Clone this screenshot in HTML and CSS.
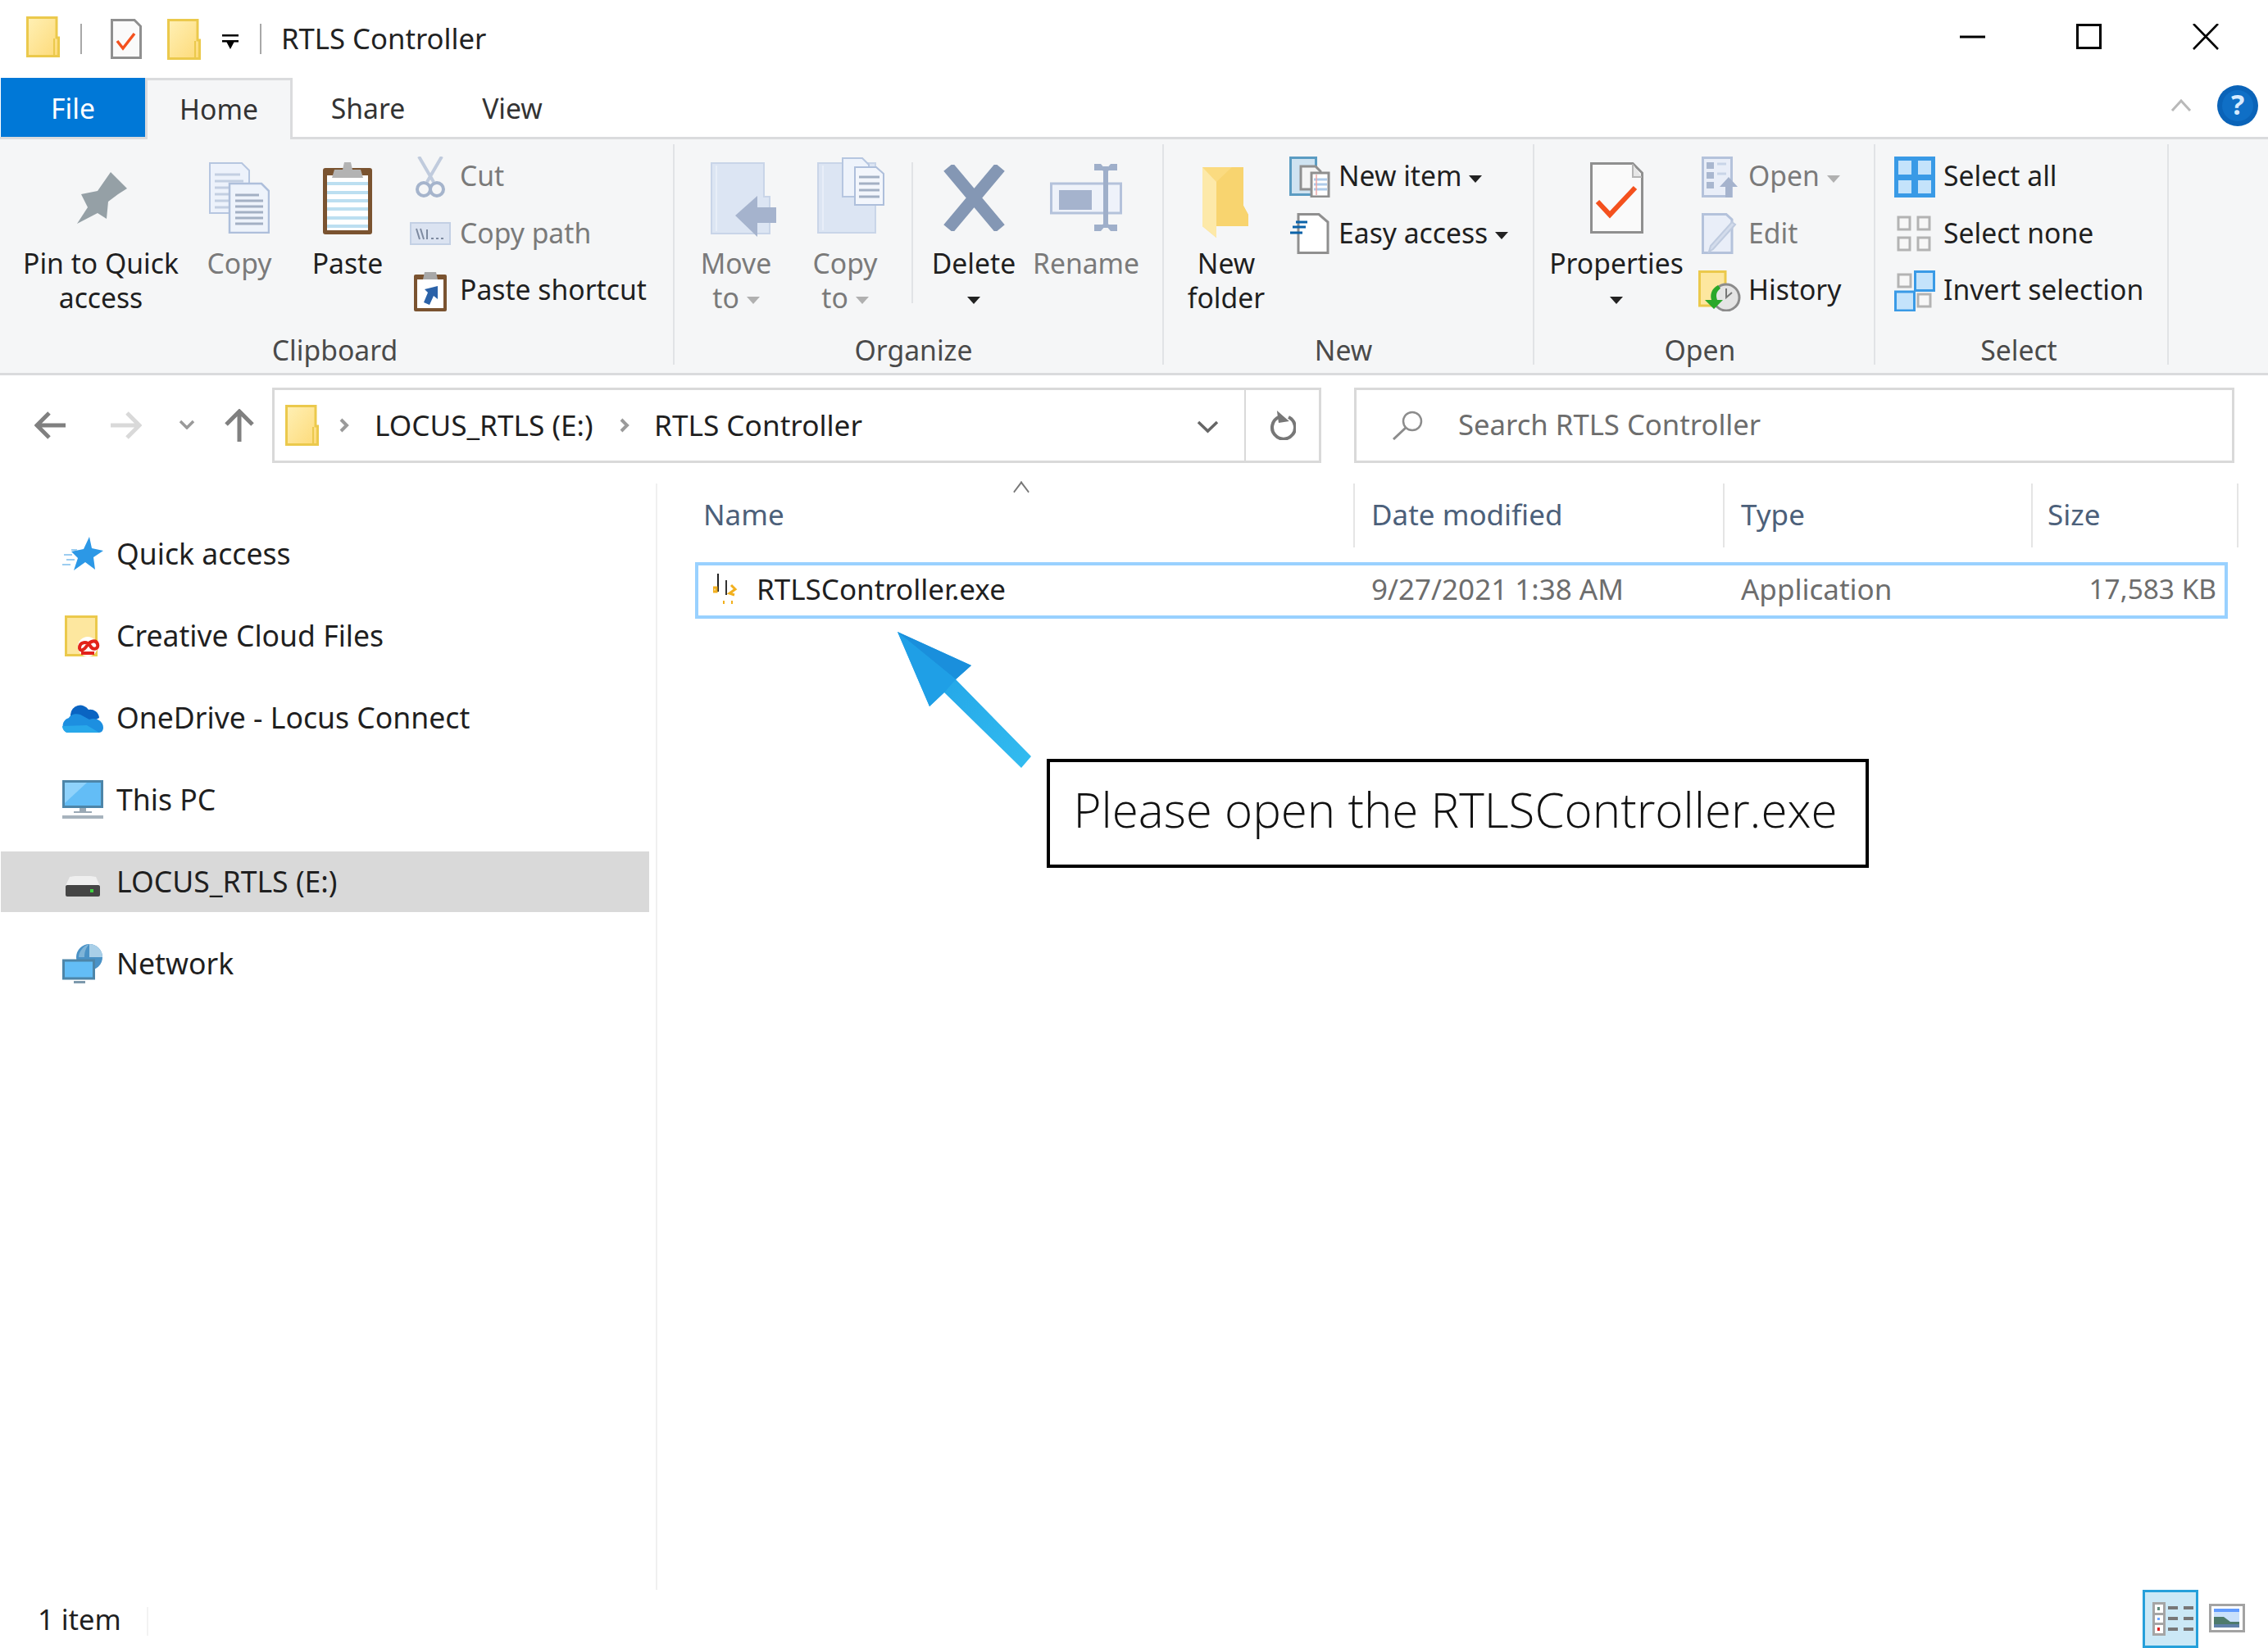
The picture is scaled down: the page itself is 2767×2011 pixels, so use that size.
FILE: index.html
```html
<!DOCTYPE html>
<html lang="en">

<head>
    <meta charset="UTF-8">
    <title>RTLS Controller</title>
    <link rel="stylesheet" href="styles.css">
</head>

<body>
    <svg class="defs" width="0" height="0">
        <defs>
            <linearGradient id="folderFill" x1="0" y1="0" x2="1" y2="1">
                <stop offset="0" stop-color="#fff0b5" />
                <stop offset="1" stop-color="#fdda78" />
            </linearGradient>
            <linearGradient id="arrowFill" x1="0" y1="0" x2="1" y2="1">
                <stop offset="0" stop-color="#1d9de4" />
                <stop offset="1" stop-color="#33bcf0" />
            </linearGradient>
            <symbol id="folder" viewBox="0 0 41 50">
                <path d="M1.5 1.5H37V26H39.5V48.5H1.5Z" fill="url(#folderFill)" stroke="#ebc94c" stroke-width="3" />
                <path d="M34 27V48" stroke="#ebc94c" stroke-width="2" />
            </symbol>
            <symbol id="chev" viewBox="0 0 15 20">
                <path d="M3 3L10 10L3 17" fill="none" stroke="#9a9a9a" stroke-width="4" />
            </symbol>
        </defs>
    </svg>

    <div class="window">
        <!-- title bar -->
        <header class="titlebar">
            <svg class="ico-folder-a" width="41" height="50"><use href="#folder" /></svg>
            <span class="qa-sep"></span>
            <svg class="ico-doc" width="38" height="49" viewBox="0 0 38 49">
                <path d="M1.5 1.5H29L36.5 9V47.5H1.5Z" fill="#fafafa" stroke="#8f8f8f" stroke-width="3" />
                <path d="M8 27L15 36L29 18" fill="none" stroke="#f4511e" stroke-width="3.5" />
            </svg>
            <svg class="ico-folder-b" width="41" height="50"><use href="#folder" /></svg>
            <svg class="ico-qa-menu" width="22" height="18" viewBox="0 0 22 18">
                <path d="M1 0H21V2.5H1ZM1 7H21V9.5H15.5L11 18L6.5 9.5H1Z" />
            </svg>
            <span class="qa-sep sep-b"></span>
            <span class="title-text">RTLS Controller</span>
            <div class="win-buttons">
                <span class="win-btn"><svg width="32" height="32" viewBox="0 0 32 32"><path d="M0 16H31" stroke="#000" stroke-width="3" /></svg></span>
                <span class="win-btn"><svg width="32" height="32" viewBox="0 0 32 32"><rect x="1.5" y="1.5" width="28" height="28" fill="none" stroke="#000" stroke-width="3" /></svg></span>
                <span class="win-btn"><svg width="32" height="32" viewBox="0 0 32 32"><path d="M1 0L31 31M31 0L1 31" stroke="#000" stroke-width="2.6" /></svg></span>
            </div>
        </header>

        <!-- tabs -->
        <nav class="tabs">
            <a class="tab tab-file">File</a>
            <a class="tab tab-home">Home</a>
            <a class="tab tab-share">Share</a>
            <a class="tab tab-view">View</a>
            <svg class="collapse" width="26" height="17" viewBox="0 0 26 17">
                <path d="M2 15L13 3L24 15" fill="none" stroke="#b9b9b9" stroke-width="3" />
            </svg>
            <svg class="help" width="50" height="50" viewBox="0 0 50 50">
                <circle cx="25" cy="25" r="25" fill="#0a63b8" />
                <circle cx="25" cy="25" r="19" fill="#0f6fc6" />
                <text x="25" y="36" text-anchor="middle" class="help-mark">?</text>
            </svg>
        </nav>

        <!-- ribbon -->
        <section class="ribbon">
            <div class="group g-clipboard">
                <div class="group-body">
                    <div class="big b-pin">
                        <span class="big-icon">
                            <svg width="63" height="63" viewBox="0 0 63 63">
                                <path d="M43 0L63 20L52 27L40 36L38 57L27 50L2 63L15 43L7 27L27 23Z" fill="#95a0a6" />
                            </svg>
                        </span>
                        <span class="big-label">Pin to Quick<br>access</span>
                    </div>
                    <div class="big b-copy off">
                        <span class="big-icon">
                            <svg width="74" height="87" viewBox="0 0 74 87">
                                <path d="M1 1H40L49 10V62H1Z" fill="#edf2fb" stroke="#b6c6e0" stroke-width="2" />
                                <path d="M7 15H38M7 23H42M7 31H42M7 39H24M7 47H24M7 55H24" stroke="#c3cfe2" stroke-width="3" />
                                <path d="M25 26H64L73 35V86H25Z" fill="#eef3fb" stroke="#aebfdb" stroke-width="2.5" />
                                <path d="M32 40H61M32 47H66M32 54H66M32 61H66M32 68H66M32 75H66" stroke="#a3b0c4" stroke-width="3" />
                            </svg>
                        </span>
                        <span class="big-label">Copy</span>
                    </div>
                    <div class="big b-paste">
                        <span class="big-icon">
                            <svg width="62" height="90" viewBox="0 0 62 90">
                                <path d="M4 9H58Q61 9 61 12V87Q61 90 58 90H4Q1 90 1 87V12Q1 9 4 9Z" fill="#7a5330" />
                                <rect x="6" y="18" width="50" height="67" fill="#fff" />
                                <path d="M6 28H56M6 39H56M6 49H56M6 59H56M6 70H56M6 80H56" stroke="#bcdff1" stroke-width="4" />
                                <path d="M27 2H35L37 11H47L50 21H12L15 11H25Z" fill="#b3b3b3" />
                            </svg>
                        </span>
                        <span class="big-label">Paste</span>
                    </div>
                    <div class="small-col c-clip">
                        <div class="small off">
                            <span class="small-icon">
                                <svg width="36" height="50" viewBox="0 0 36 50">
                                    <path d="M4 0L22 31M32 0L14 31" stroke="#c0cbdd" stroke-width="4" />
                                    <circle cx="10" cy="40" r="8" fill="none" stroke="#a5b4cc" stroke-width="4" />
                                    <circle cx="26" cy="40" r="8" fill="none" stroke="#a5b4cc" stroke-width="4" />
                                </svg>
                            </span>
                            <span>Cut</span>
                        </div>
                        <div class="small off">
                            <span class="small-icon">
                                <svg width="50" height="28" viewBox="0 0 50 28">
                                    <rect x="1" y="1" width="48" height="26" fill="#dbe3f1" stroke="#c3d0e4" stroke-width="2" />
                                    <path d="M8 8L12 21M13 8L17 21M21 9V21" stroke="#7d8aa0" stroke-width="2" />
                                    <path d="M26 20H29M32 20H35M38 20H41" stroke="#7d8aa0" stroke-width="2" />
                                </svg>
                            </span>
                            <span>Copy path</span>
                        </div>
                        <div class="small">
                            <span class="small-icon">
                                <svg width="42" height="50" viewBox="0 0 42 50">
                                    <path d="M3 5H39Q41 5 41 7V48Q41 50 39 50H3Q1 50 1 48V7Q1 5 3 5Z" fill="#7a5330" />
                                    <rect x="5" y="11" width="32" height="35" fill="#fff" />
                                    <path d="M14 2H28L30 11H12Z" fill="#a8a8a8" />
                                    <path d="M13 39L18 27L14 23L30 19V35L25 31L20 42Z" fill="#2b62a8" />
                                </svg>
                            </span>
                            <span>Paste shortcut</span>
                        </div>
                    </div>
                </div>
                <div class="group-label">Clipboard</div>
            </div>

            <div class="group g-organize">
                <div class="group-body">
                    <div class="big b-move off">
                        <span class="big-icon">
                            <svg class="ico-move" width="80" height="91" viewBox="0 0 80 91">
                                <path d="M1 1H65V42H72V87H1Z" fill="#dce5f3" stroke="#c9d5e8" stroke-width="2" />
                                <path d="M7 4V84" stroke="#e8eef8" stroke-width="2" />
                                <path d="M57 41V55H80V74H57V91L30 65Z" fill="#a5b3cd" />
                            </svg>
                        </span>
                        <span class="big-label">Move<br>to <i class="drop drop-off"></i></span>
                    </div>
                    <div class="big b-copyto off">
                        <span class="big-icon">
                            <svg class="ico-copyto" width="82" height="93" viewBox="0 0 82 93">
                                <path d="M1 7H71V92H1Z" fill="#dce5f3" stroke="#c9d5e8" stroke-width="2" />
                                <path d="M7 10V89" stroke="#e8eef8" stroke-width="2" />
                                <path d="M31 1H55L63 9V48H31Z" fill="#eef3fb" stroke="#b6c6e0" stroke-width="2" />
                                <path d="M46 12H72L81 20V58H46Z" fill="#f3f6fc" stroke="#aebfdb" stroke-width="2" />
                                <path d="M51 24H76M51 32H76M51 40H76M51 48H76" stroke="#a3b0c4" stroke-width="3" />
                            </svg>
                        </span>
                        <span class="big-label">Copy<br>to <i class="drop drop-off"></i></span>
                    </div>
                    <span class="inner-sep"></span>
                    <div class="big b-delete">
                        <span class="big-icon">
                            <svg width="79" height="81" viewBox="0 0 79 81">
                                <path d="M8 3L71 78M71 3L8 78" stroke="#8497b4" stroke-width="15" />
                            </svg>
                        </span>
                        <span class="big-label">Delete<br><i class="drop"></i></span>
                    </div>
                    <div class="big b-rename off">
                        <span class="big-icon">
                            <svg width="88" height="82" viewBox="0 0 88 82">
                                <rect x="1.5" y="24" width="85" height="36" fill="#eef2fa" stroke="#b4c2db" stroke-width="3" />
                                <rect x="11" y="32" width="40" height="24" fill="#a5b3cd" />
                                <path d="M68 3V78" stroke="#9fafca" stroke-width="6" />
                                <path d="M54 0H62L68 7L74 0H82V8H72L68 11L64 8H54ZM54 82H62L68 75L74 82H82V74H72L68 71L64 74H54Z" fill="#9fafca" />
                            </svg>
                        </span>
                        <span class="big-label">Rename</span>
                    </div>
                </div>
                <div class="group-label">Organize</div>
            </div>

            <div class="group g-new">
                <div class="group-body">
                    <div class="big b-newfolder">
                        <span class="big-icon icon-low">
                            <svg width="58" height="86" viewBox="0 0 58 86">
                                <path d="M0 0H50V47L56 58V72H17V86L0 72Z" fill="#fbdb80" />
                                <path d="M0 0L17 18V86L0 72Z" fill="#fde9a9" />
                                <path d="M17 18L36 0H50V47L56 58V72H17Z" fill="#f8d46f" />
                            </svg>
                        </span>
                        <span class="big-label">New<br>folder</span>
                    </div>
                    <div class="small-col c-new">
                        <div class="small">
                            <span class="small-icon">
                                <svg width="50" height="50" viewBox="0 0 50 50">
                                    <rect x="1.5" y="1.5" width="31" height="45" fill="#cfe3f1" stroke="#5b9cc2" stroke-width="3" />
                                    <path d="M14 12H32L38 18V40H14Z" fill="#f4f4f4" stroke="#8f8f8f" stroke-width="3" />
                                    <path d="M27 20H48V49H27Z" fill="#fff" stroke="#8f8f8f" stroke-width="3" />
                                    <path d="M30 28H46M30 34H46M30 40H46" stroke="#aecbea" stroke-width="3" />
                                    <path d="M33 22V47" stroke="#eea6a6" stroke-width="1.5" />
                                </svg>
                            </span>
                            <span>New item <i class="drop"></i></span>
                        </div>
                        <div class="small">
                            <span class="small-icon">
                                <svg width="50" height="50" viewBox="0 0 50 50">
                                    <path d="M11 1.5H36L47 11V48.5H11Z" fill="#fff" stroke="#8f8f8f" stroke-width="3" />
                                    <path d="M8 11H22M4 17H20M1 24H16" stroke="#0b62a8" stroke-width="3" />
                                </svg>
                            </span>
                            <span>Easy access <i class="drop"></i></span>
                        </div>
                    </div>
                </div>
                <div class="group-label">New</div>
            </div>

            <div class="group g-open">
                <div class="group-body">
                    <div class="big b-props">
                        <span class="big-icon">
                            <svg width="65" height="87" viewBox="0 0 65 87">
                                <path d="M1.5 1.5H52L63.5 13V85.5H1.5Z" fill="#fafafa" stroke="#8f8f8f" stroke-width="3" />
                                <path d="M52 2V18H63" fill="#e6e6e6" stroke="#b5b5b5" stroke-width="2" />
                                <path d="M9 48L24 64L55 31" fill="none" stroke="#f4511e" stroke-width="6" />
                            </svg>
                        </span>
                        <span class="big-label">Properties<br><i class="drop"></i></span>
                    </div>
                    <div class="small-col c-open">
                        <div class="small off">
                            <span class="small-icon">
                                <svg width="45" height="50" viewBox="0 0 45 50">
                                    <rect x="1.5" y="1.5" width="35" height="47" fill="#e9eef8" stroke="#b4c2db" stroke-width="3" />
                                    <path d="M6 7H15V15H6ZM6 19H15V27H6ZM6 31H15V39H6Z" fill="#a9b7cf" />
                                    <path d="M19 9H30M19 21H30" stroke="#c9d5e8" stroke-width="3" />
                                    <path d="M33 25L44 37H37V50H29V37H22Z" fill="#a5b3cd" />
                                </svg>
                            </span>
                            <span>Open <i class="drop drop-off"></i></span>
                        </div>
                        <div class="small off">
                            <span class="small-icon">
                                <svg width="45" height="50" viewBox="0 0 45 50">
                                    <path d="M1.5 1.5H30L37 8V48.5H1.5Z" fill="#e9eef8" stroke="#b4c2db" stroke-width="3" />
                                    <path d="M41 14L14 44L9 47L11 40L37 11Z" fill="#d3dcec" stroke="#bfcbdf" stroke-width="2" />
                                </svg>
                            </span>
                            <span>Edit</span>
                        </div>
                        <div class="small">
                            <span class="small-icon">
                                <svg width="52" height="50" viewBox="0 0 52 50">
                                    <path d="M1.5 1.5H33V43H1.5Z" fill="#fde79f" stroke="#ebc94c" stroke-width="3" />
                                    <circle cx="34" cy="33" r="16" fill="#e4e4e4" stroke="#8b8b8b" stroke-width="3" />
                                    <path d="M34 22V33L41 27" fill="none" stroke="#777" stroke-width="2" />
                                    <path d="M24 18C16 22 14 30 16 36H8L19 47L30 36H23C21 30 22 26 27 22Z" fill="#2aa82a" />
                                </svg>
                            </span>
                            <span>History</span>
                        </div>
                    </div>
                </div>
                <div class="group-label">Open</div>
            </div>

            <div class="group g-select">
                <div class="group-body">
                    <div class="small-col">
                        <div class="small">
                            <span class="small-icon">
                                <svg width="50" height="50" viewBox="0 0 50 50">
                                    <rect width="50" height="50" fill="#399ae6" />
                                    <path d="M5 5H21V22H5ZM29 5H45V22H29ZM5 29H21V45H5ZM29 29H45V45H29Z" fill="#c4e3fb" />
                                </svg>
                            </span>
                            <span>Select all</span>
                        </div>
                        <div class="small">
                            <span class="small-icon">
                                <svg width="50" height="44" viewBox="0 0 50 44">
                                    <path d="M5 2H19V17H5ZM29 2H43V17H29ZM5 27H19V42H5ZM29 27H43V42H29Z" fill="#f7f7f7" stroke="#b3b3b3" stroke-width="3" />
                                </svg>
                            </span>
                            <span>Select none</span>
                        </div>
                        <div class="small">
                            <span class="small-icon">
                                <svg width="50" height="50" viewBox="0 0 50 50">
                                    <path d="M5 5H20V20H5ZM29 29H44V44H29Z" fill="#f7f7f7" stroke="#b3b3b3" stroke-width="3" />
                                    <rect x="25.5" y="1.5" width="23" height="23" fill="#c4e3fb" stroke="#399ae6" stroke-width="3" />
                                    <rect x="1.5" y="26" width="23" height="23" fill="#c4e3fb" stroke="#399ae6" stroke-width="3" />
                                </svg>
                            </span>
                            <span>Invert selection</span>
                        </div>
                    </div>
                </div>
                <div class="group-label">Select</div>
            </div>
        </section>

        <!-- back / forward, address, search -->
        <div class="navbar">
            <svg class="nav-back" width="38" height="34" viewBox="0 0 38 34"><path d="M38 17H4M18 2L3 17L18 32" fill="none" stroke="#808080" stroke-width="5" /></svg>
            <svg class="nav-fwd" width="38" height="34" viewBox="0 0 38 34"><path d="M0 17H34M20 2L35 17L20 32" fill="none" stroke="#d9d9d9" stroke-width="5" /></svg>
            <svg class="nav-recent" width="20" height="12" viewBox="0 0 20 12"><path d="M2 2L10 10L18 2" fill="none" stroke="#9a9a9a" stroke-width="3.5" /></svg>
            <svg class="nav-up" width="36" height="40" viewBox="0 0 36 40"><path d="M18 40V4M2 19L18 3L34 19" fill="none" stroke="#808080" stroke-width="5" /></svg>

            <div class="address">
                <svg class="addr-folder" width="41" height="50"><use href="#folder" /></svg>
                <svg class="addr-chev" width="15" height="20"><use href="#chev" /></svg>
                <span class="crumb crumb-drive">LOCUS_RTLS (E:)</span>
                <svg width="15" height="20"><use href="#chev" /></svg>
                <span class="crumb crumb-folder">RTLS Controller</span>
                <svg class="addr-drop" width="27" height="16" viewBox="0 0 27 16"><path d="M2 2L13.5 13L25 2" fill="none" stroke="#666" stroke-width="3.5" /></svg>
                <span class="addr-refresh">
                    <svg width="32" height="36" viewBox="0 0 32 36">
                        <path d="M11 8A14 14 0 1 0 23 8" fill="none" stroke="#777" stroke-width="4" />
                        <path d="M10 0V15H23Z" fill="#777" transform="rotate(-8 10 8)" />
                    </svg>
                </span>
            </div>

            <div class="search">
                <svg width="40" height="36" viewBox="0 0 40 36">
                    <circle cx="26" cy="13" r="11" fill="none" stroke="#8c8c8c" stroke-width="2.5" />
                    <path d="M18 21L3 35" stroke="#8c8c8c" stroke-width="3" />
                </svg>
                <span class="search-text">Search RTLS Controller</span>
            </div>
        </div>

        <!-- sidebar + file list -->
        <div class="content">
            <aside class="sidebar">
                <div class="side-row">
                    <span class="side-icon">
                        <svg width="50" height="42" viewBox="0 0 50 42">
                            <path d="M33 0L36 14L50 17L38 25L40 40L28 31L14 41L19 26L11 18L26 15Z" fill="#2c98e6" />
                            <path d="M2 22H12M5 28H15M0 34H10M11 16H18" stroke="#9ccdf0" stroke-width="2" />
                        </svg>
                    </span>
                    <span>Quick access</span>
                </div>
                <div class="side-row">
                    <span class="side-icon">
                        <svg width="44" height="50" viewBox="0 0 44 50">
                            <rect x="1.5" y="1.5" width="37" height="47" fill="#fde79f" stroke="#ebc94c" stroke-width="3" />
                            <circle cx="28" cy="38" r="12" fill="#fff" />
                            <path d="M18 40C18 32 27 31 31 37C34 43 42 41 40 35C38 29 31 31 27 37C23 43 19 44 18 40ZM20 46H36" fill="none" stroke="#e2231a" stroke-width="4" />
                        </svg>
                    </span>
                    <span>Creative Cloud Files</span>
                </div>
                <div class="side-row">
                    <span class="side-icon">
                        <svg width="50" height="36" viewBox="0 0 50 36">
                            <path d="M10 14A12 12 0 0 1 32 8A11 11 0 0 1 45 18L30 26L10 22Z" fill="#0a64c2" />
                            <path d="M6 36C-1 34 -2 21 8 18C10 14 16 12 22 14L33 20C41 17 50 22 50 30C50 33 48 36 45 36Z" fill="#1d8fe0" />
                            <path d="M6 36C2 35 0 31 0 28L30 27L45 36Z" fill="#28a8ea" />
                        </svg>
                    </span>
                    <span>OneDrive - Locus Connect</span>
                </div>
                <div class="side-row">
                    <span class="side-icon">
                        <svg width="50" height="48" viewBox="0 0 50 48">
                            <rect x="1.5" y="1.5" width="47" height="31" fill="#63bdf6" stroke="#4d85a8" stroke-width="3" />
                            <path d="M3 3H30L3 28Z" fill="#8fd2fb" />
                            <path d="M21 34H29V38H21ZM14 38H36V40H14Z" fill="#9aa9b5" />
                            <rect y="43" width="50" height="4" fill="#a7b3bd" />
                        </svg>
                    </span>
                    <span>This PC</span>
                </div>
                <div class="side-row active">
                    <span class="side-icon">
                        <svg class="ico-drive" width="44" height="26" viewBox="0 0 44 26">
                            <path d="M6 1Q22 -2 38 1L43 12H1Z" fill="#efefef" />
                            <rect x="1" y="11" width="42" height="14" rx="2" fill="#454545" />
                            <rect x="31" y="16" width="4" height="4" fill="#40d040" />
                        </svg>
                    </span>
                    <span>LOCUS_RTLS (E:)</span>
                </div>
                <div class="side-row">
                    <span class="side-icon">
                        <svg width="50" height="50" viewBox="0 0 50 50">
                            <circle cx="33" cy="17" r="16" fill="#4a92c6" />
                            <path d="M33 1A16 16 0 0 1 49 17H33Z" fill="#a9cfe8" />
                            <path d="M33 1C28 6 27 12 27 17H20C20 10 26 3 33 1Z" fill="#7eb4d8" />
                            <rect x="1.5" y="21" width="37" height="22" fill="#63bdf6" stroke="#4d85a8" stroke-width="3" />
                            <path d="M14 46H28V49H14Z" fill="#7d99ad" />
                        </svg>
                    </span>
                    <span>Network</span>
                </div>
            </aside>

            <main class="files">
                <div class="file-head">
                    <span class="col col-name">Name</span>
                    <span class="col col-date">Date modified</span>
                    <span class="col col-type">Type</span>
                    <span class="col col-size">Size</span>
                </div>
                <div class="file-row">
                    <span class="cell-name">
                        <svg width="30" height="37" viewBox="0 0 30 37">
                            <path d="M6 0V22" stroke="#222" stroke-width="2" />
                            <path d="M0 17H4V22H0ZM22 14L27 19L20 24L26 26" fill="none" stroke="#f2b01e" stroke-width="3" />
                            <path d="M16 8V26" stroke="#333" stroke-width="2" />
                            <path d="M12 33H14V37H12ZM22 33H24V37H22Z" fill="#f2b01e" />
                        </svg>
                        RTLSController.exe
                    </span>
                    <span class="cell-date">9/27/2021 1:38 AM</span>
                    <span class="cell-type">Application</span>
                    <span class="cell-size">17,583 KB</span>
                </div>
            </main>
        </div>

        <!-- status bar -->
        <footer class="status">
            <span class="status-count">1 item</span>
            <span class="status-sep"></span>
            <span class="view-btn">
                <svg width="68" height="71" viewBox="0 0 68 71">
                    <rect x="1.5" y="1.5" width="65" height="68" fill="#cbe8f6" stroke="#26a0da" stroke-width="3" />
                    <rect x="12" y="15" width="16" height="41" fill="#a5a5a5" />
                    <path d="M15 18H25V28H15ZM15 31H25V40H15ZM15 43H25V53H15Z" fill="#fff" />
                    <rect x="18" y="21" width="3" height="4" fill="#5f8a7c" />
                    <rect x="18" y="34" width="3" height="3" fill="#6ba5ff" />
                    <rect x="18" y="46" width="3" height="4" fill="#dd2222" />
                    <path d="M31 22H43M50 22H62M31 35H43M50 35H62M31 48H43M50 48H62" stroke="#777" stroke-width="4" />
                </svg>
            </span>
            <span class="view-thumb">
                <svg width="44" height="35" viewBox="0 0 44 35">
                    <rect x="1.5" y="1.5" width="41" height="32" fill="#fff" stroke="#a3a3a3" stroke-width="3" />
                    <rect x="6" y="6" width="31" height="23" fill="#c9e0fb" />
                    <rect x="6" y="6" width="31" height="4" fill="#629cff" />
                    <path d="M6 16H18L26 22H37V26H6Z" fill="#4e7a6c" />
                    <rect x="6" y="25" width="31" height="4" fill="#5f80a8" />
                </svg>
            </span>
        </footer>

        <!-- annotation drawn over the screenshot -->
        <svg class="callout-arrow" width="185" height="180" viewBox="0 0 185 180">
            <path d="M10 6L100 47L81 64L173 158L161 172L67 80L49 97Z" fill="url(#arrowFill)" />
            <path d="M10 6L100 47L81 64Z" fill="#1a8fdc" />
            <path d="M10 6L81 64L67 80L49 97Z" fill="#1f9fe6" />
        </svg>
        <div class="callout">Please open the RTLSController.exe</div>
    </div>
</body>

</html>
```

FILE: styles.css
```css
* {
    box-sizing: border-box;
}

html,
body {
    margin: 0;
    height: 100%;
    background: #fff;
    overflow: hidden;
}

body {
    font-family: "Noto Sans", "Open Sans", sans-serif;
    font-size: 33.7px;
    color: #1f1f1f;
}

.defs {
    position: absolute;
}

svg {
    display: block;
    flex: none;
}

.window {
    position: relative;
    width: 2767px;
    height: 2011px;
    display: flex;
    flex-direction: column;
}

/* title bar */
.titlebar {
    height: 95px;
    display: flex;
    align-items: center;
    padding-left: 32px;
}

.ico-folder-a {
    margin-top: -5px;
}

.qa-sep {
    width: 2px;
    height: 37px;
    margin-left: 25px;
    background: #a8a8a8;
}

.ico-doc {
    margin-left: 35px;
}

.ico-folder-b {
    margin-left: 31px;
}

.ico-qa-menu {
    margin-left: 25px;
    margin-top: 6px;
}

.sep-b {
    margin-left: 25px;
}

.title-text {
    margin-left: 24px;
    padding-bottom: 3px;
    font-size: 34.7px;
    color: #222;
}

.win-buttons {
    display: flex;
    margin-left: auto;
    margin-right: 5px;
    margin-top: -6px;
}

.win-btn {
    width: 142px;
    display: flex;
    justify-content: center;
}

/* tabs */
.tabs {
    height: 75px;
    display: flex;
    border-bottom: 3px solid #dadbdd;
    padding-left: 1px;
}

.tab {
    height: 72px;
    display: flex;
    align-items: center;
    justify-content: center;
    padding-top: 2px;
    color: #333;
}

.tab-file {
    width: 176px;
    background: #0078d7;
    color: #fff;
}

.tab-home {
    width: 180px;
    height: 75px;
    background: #f5f6f7;
    border: 3px solid #dadbdd;
    border-bottom: 0;
    padding-top: 0;
    padding-bottom: 2px;
}

.tab-share {
    width: 184px;
}

.tab-view {
    width: 168px;
}

.collapse {
    margin-left: auto;
    margin-top: 25px;
}

.help {
    margin-left: 31px;
    margin-right: 12px;
    margin-top: 9px;
}

.help-mark {
    font-size: 34px;
    font-weight: 700;
    fill: #d9ecff;
}

/* ribbon */
.ribbon {
    height: 288px;
    display: flex;
    background: #f5f6f7;
    border-bottom: 3px solid #dadbdd;
    padding-top: 6px;
    padding-bottom: 10px;
}

.group {
    display: flex;
    flex-direction: column;
    border-right: 2px solid #e1e3e6;
    padding-top: 4px;
}

.g-clipboard {
    width: 823px;
}

.g-organize {
    width: 597px;
}

.g-new {
    width: 452px;
}

.g-open {
    width: 416px;
}

.g-select {
    width: 358px;
    padding-left: 23px;
}

.group-body {
    display: flex;
}

.group-label {
    margin-top: auto;
    line-height: 36px;
    text-align: center;
    color: #4a4a4a;
    padding-right: 12px;
}

.g-clipboard .group-label {
    padding-right: 4px;
}

.g-open .group-label {
    padding-right: 10px;
}

.g-select .group-label {
    padding-right: 29px;
}

.big {
    display: flex;
    flex-direction: column;
    align-items: center;
    text-align: center;
}

.big-icon {
    height: 122px;
    display: flex;
    align-items: center;
    justify-content: center;
}

.icon-low {
    padding-top: 12px;
}

.ico-move {
    margin-left: 18px;
    margin-top: 4px;
}

.ico-copyto {
    margin-left: 14px;
    margin-top: -6px;
}

.big-label {
    margin-top: -2px;
    line-height: 42px;
    white-space: nowrap;
}

.off {
    color: #7a7a7a;
}

.b-pin {
    width: 214px;
    margin-left: 16px;
}

.b-copy {
    width: 124px;
}

.b-paste {
    width: 140px;
}

.b-move {
    width: 150px;
}

.b-copyto {
    width: 116px;
}

.b-delete {
    width: 148px;
}

.b-rename {
    width: 126px;
}

.b-newfolder {
    width: 152px;
}

.b-props {
    width: 200px;
}

.inner-sep {
    width: 2px;
    height: 172px;
    margin: 18px 0 0 23px;
    background: #e1e3e6;
}

.drop {
    display: inline-block;
    width: 0;
    height: 0;
    border-left: 8px solid transparent;
    border-right: 8px solid transparent;
    border-top: 9px solid #222;
    vertical-align: middle;
}

.drop-off {
    border-top-color: #b0b0b0;
}

.small-col {
    padding-top: 1px;
    display: flex;
    flex-direction: column;
}

.c-clip {
    margin-left: 6px;
}

.c-new,
.c-open {
    margin-left: 1px;
}

.small {
    height: 69.5px;
    display: flex;
    align-items: center;
    white-space: nowrap;
}

.small > span:last-child {
    margin-top: -3px;
}

.small-icon {
    width: 50px;
    margin-right: 11px;
    display: flex;
    justify-content: center;
}

.g-new .small-icon,
.g-open .small-icon {
    margin-right: 10px;
}

.g-select .small-icon {
    margin-right: 10px;
}

/* navigation row */
.navbar {
    height: 132px;
    display: flex;
    align-items: flex-start;
    padding: 15px 0 0 42px;
}

.nav-back,
.nav-fwd,
.nav-recent,
.nav-up {
    margin-top: 29px;
}

.nav-fwd {
    margin-left: 55px;
}

.nav-recent {
    margin-left: 45px;
    margin-top: 39px;
}

.nav-up {
    margin-left: 36px;
    margin-top: 26px;
}

.address {
    width: 1280px;
    height: 92px;
    margin-left: 22px;
    display: flex;
    align-items: center;
    border: 3px solid #d9d9d9;
    padding-left: 13px;
}

.addr-chev {
    margin-left: 24px;
}

.crumb {
    padding-bottom: 3px;
    font-size: 35.2px;
    white-space: nowrap;
}

.crumb-drive {
    width: 298px;
    margin-left: 29px;
}

.crumb-folder {
    margin-left: 28px;
}

.addr-drop {
    margin-left: auto;
    margin-right: 31px;
    margin-top: 4px;
}

.addr-refresh {
    width: 91px;
    height: 100%;
    display: flex;
    align-items: center;
    justify-content: center;
    border-left: 2px solid #d9d9d9;
}

.search {
    width: 1074px;
    height: 92px;
    margin-left: 40px;
    display: flex;
    align-items: center;
    gap: 42px;
    border: 3px solid #d9d9d9;
    padding-left: 42px;
    font-size: 34.7px;
    color: #6d6d6d;
}

.search-text {
    padding-bottom: 3px;
}

/* main area */
.content {
    flex: 1;
    display: flex;
    min-height: 0;
}

.sidebar {
    width: 802px;
    border-right: 2px solid #f0f0f0;
    padding: 49px 8px 0 1px;
    display: flex;
    flex-direction: column;
    gap: 26px;
}

.side-row {
    height: 74px;
    display: flex;
    align-items: center;
    padding-left: 75px;
    font-size: 35.6px;
}

.side-row > span:last-child {
    margin-top: -3px;
}

.side-row.active {
    background: #d9d9d9;
}

.side-icon {
    width: 50px;
    margin-right: 16px;
    display: flex;
    justify-content: center;
}

.ico-drive {
    margin-top: 12px;
}

.files {
    flex: 1;
    font-size: 35px;
}

.file-head {
    position: relative;
    display: flex;
    height: 78px;
    color: #4c607a;
}

.col {
    height: 100%;
    display: flex;
    align-items: center;
    padding-bottom: 3px;
    border-right: 2px solid #e5e5e5;
}

.col-name {
    width: 851px;
    padding-left: 56px;
}

.col-name::after {
    content: "";
    position: absolute;
    left: 436px;
    top: 2px;
    width: 14px;
    height: 14px;
    border-left: 2.5px solid #777;
    border-top: 2.5px solid #777;
    transform: rotate(45deg) skew(8deg, 8deg);
}

.col-date {
    width: 451px;
    padding-left: 20px;
}

.col-type {
    width: 376px;
    padding-left: 20px;
}

.col-size {
    width: 251px;
    padding-left: 18px;
}

.file-row {
    width: 1870px;
    height: 69px;
    margin: 18px 0 0 46px;
    border: 4px solid #99d1ff;
    display: grid;
    grid-template-columns: 821px 451px 1fr auto;
    align-items: center;
    color: #6d6d6d;
}

.file-row > span {
    padding-bottom: 5px;
}

.cell-name {
    display: flex;
    align-items: center;
    gap: 23px;
    padding-left: 18px;
    color: #1f1f1f;
}

.cell-size {
    padding-right: 10px;
    font-size: 33.4px;
}

/* status bar */
.status {
    height: 71px;
    display: flex;
    align-items: center;
    padding-left: 46px;
}

.status-count {
    width: 133px;
    font-size: 34.5px;
}

.status-sep {
    width: 2px;
    height: 35px;
    margin-top: 6px;
    background: #f2f2f2;
}

.view-btn {
    margin-left: auto;
}

.view-thumb {
    margin: -2px 28px 0 13px;
}

/* annotation */
.callout {
    position: absolute;
    left: 1277px;
    top: 926px;
    width: 1003px;
    height: 133px;
    display: flex;
    align-items: center;
    justify-content: center;
    padding: 0 6px 10px 0;
    background: #fff;
    border: 4px solid #000;
    font-family: "Open Sans", "Noto Sans", sans-serif;
    font-weight: 300;
    font-size: 58.3px;
    color: #111;
}

.callout-arrow {
    position: absolute;
    left: 1085px;
    top: 765px;
}
```
